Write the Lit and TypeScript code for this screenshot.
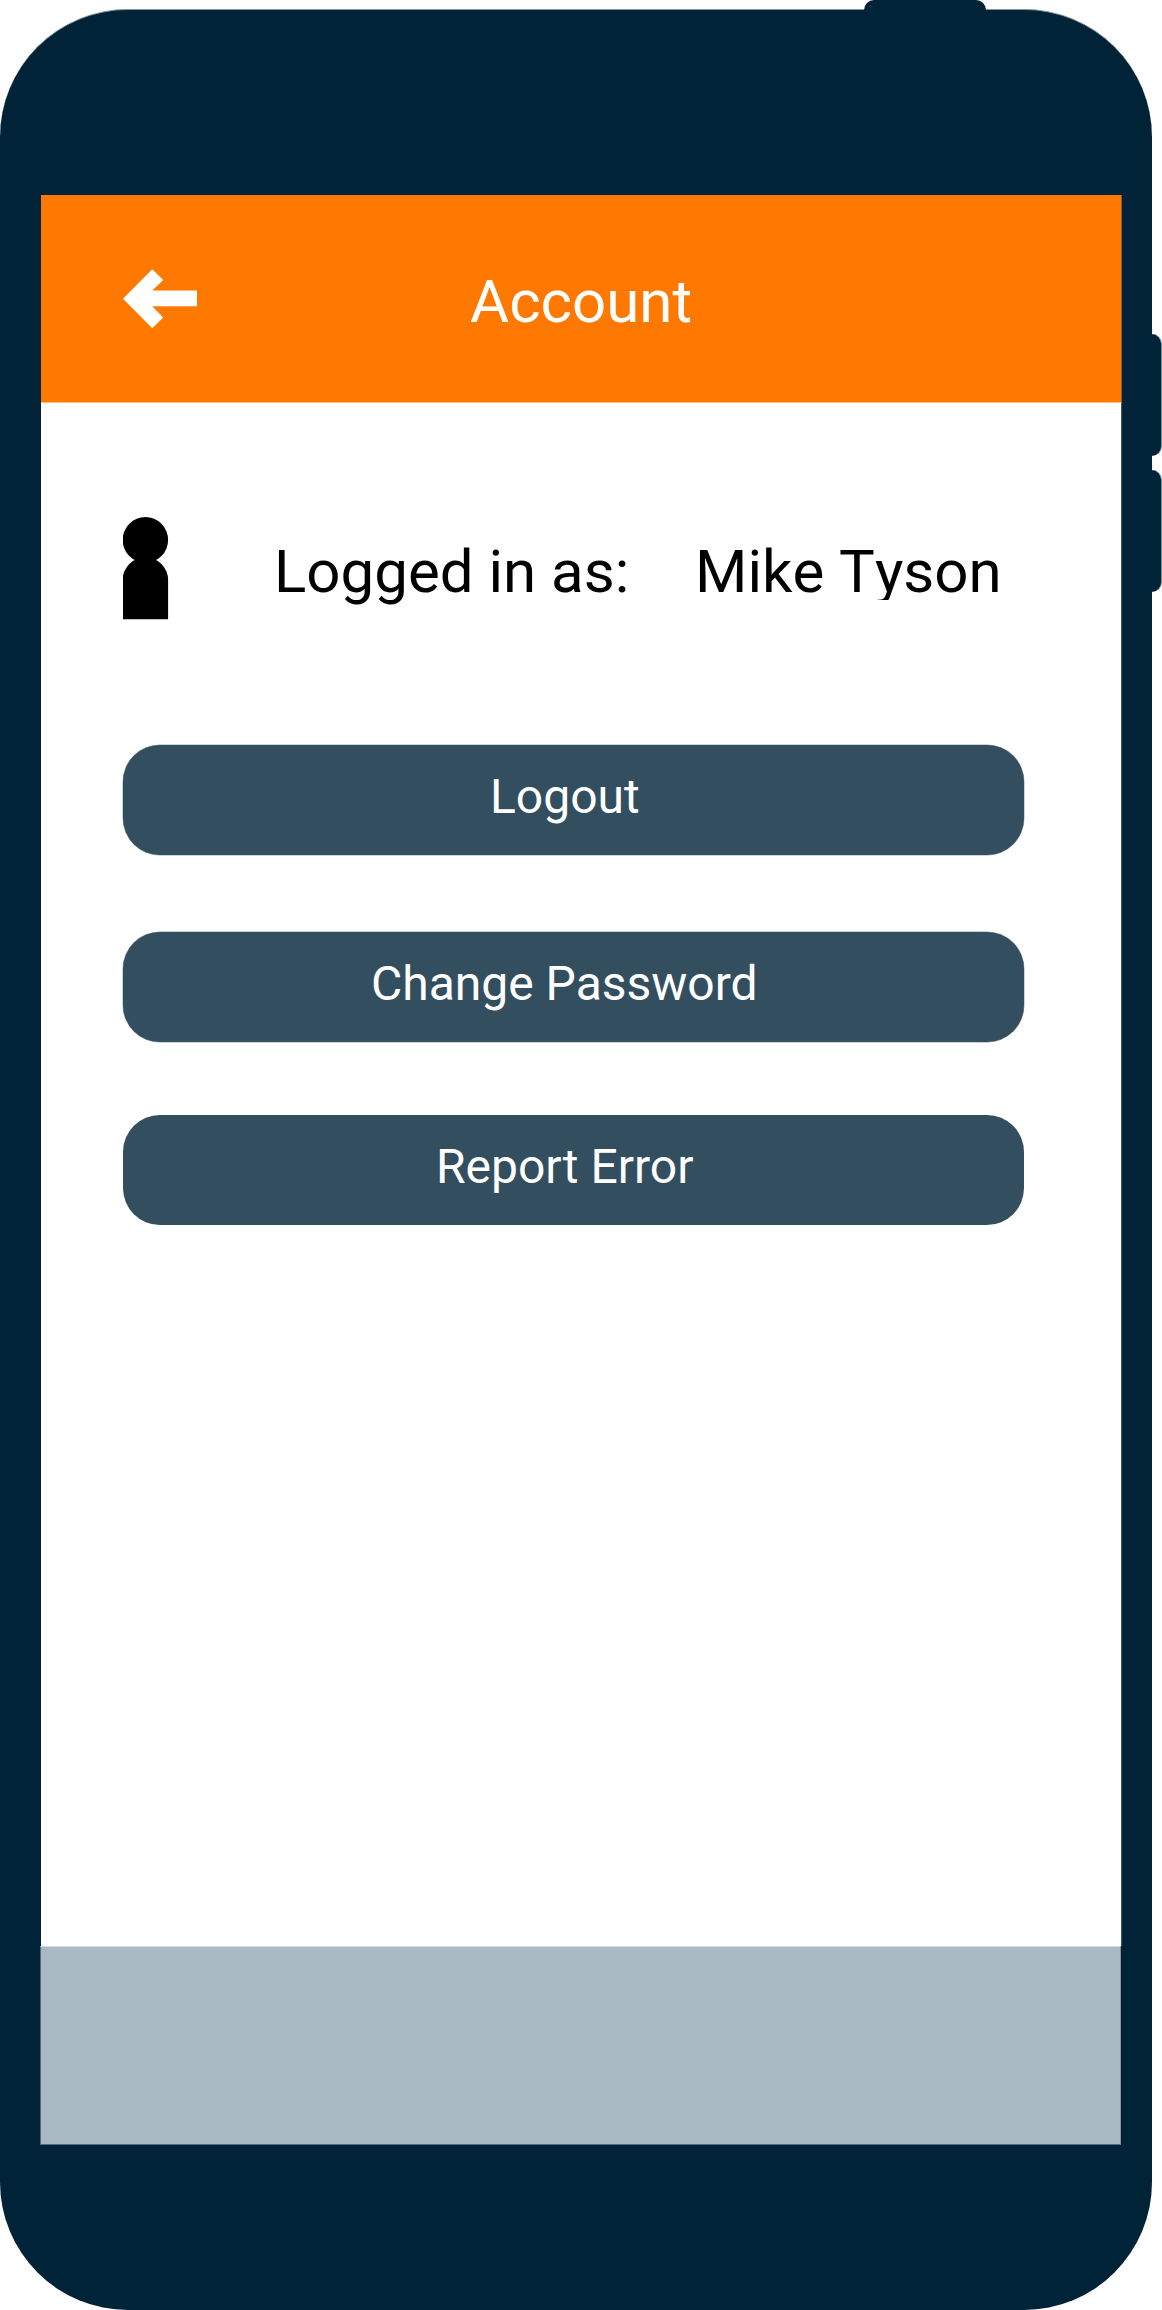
import { LitElement, html, css } from "lit";
import { customElement, property } from "lit/decorators.js";

@customElement("action-button")
class ActionButton extends LitElement {
  @property() label = "";

  static styles = css`
    :host {
      display: block;
    }
    .button {
      display: flex;
      align-items: flex-start;
      justify-content: flex-start;
      box-sizing: border-box;
      width: 100%;
      height: 100%;
      margin: 0;
      padding: var(--label-top, 24px) 0 0 var(--label-left, 0px);
      border: 0;
      border-radius: 37px;
      background: #334e5f;
      box-shadow: var(--soft-edge, none);
      color: #fff;
      font: 400 48px/56px Roboto, sans-serif;
      text-align: left;
      white-space: nowrap;
    }
  `;

  render() {
    return html`<button class="button">${this.label}</button>`;
  }
}

@customElement("app-root")
class AppRoot extends LitElement {
  static styles = css`
    :host {
      display: block;
      position: relative;
      width: 1162px;
      height: 2310px;
      overflow: hidden;
      background: #fff;
      font-family: Roboto, sans-serif;
    }
    .key {
      position: absolute;
      background: #002338;
      border-radius: 10px;
    }
    .power {
      z-index: 1;
      left: 864px;
      top: 0;
      width: 122px;
      height: 30px;
    }
    .volume {
      left: 1130px;
      width: 31px;
      height: 122px;
      border-right: 1px solid #809199;
    }
    .up {
      top: 334px;
    }
    .down {
      top: 470px;
    }
    .phone {
      position: relative;
      box-sizing: border-box;
      width: 1152px;
      height: 2301px;
      margin-top: 9px;
      padding: 185px 30px 0 40px;
      border-top: 1px solid #80919b;
      border-radius: 128px;
      background: #002338;
      display: flex;
      flex-direction: column;
    }
    .screen-wrap {
      padding-left: 1px;
    }
    .header {
      box-sizing: border-box;
      height: 208px;
      padding: 72px 0 0 82px;
      border-right: 1px solid #805c38;
      border-bottom: 1px solid #ffbd80;
      background: #ff7900;
      display: flex;
      align-items: flex-start;
    }
    .back {
      display: block;
      width: 75px;
      height: 64px;
    }
    .title {
      margin: 0 0 0 272px;
      color: #fff;
      font-size: 60px;
      font-weight: 400;
      line-height: 70px;
    }
    .content {
      box-sizing: border-box;
      height: 1543px;
      padding: 113px 0 0 82px;
      border-right: 1px solid #40596a;
      background: #fff;
    }
    .user {
      height: 105px;
      display: flex;
      align-items: flex-start;
      color: #000;
      font-size: 60px;
      line-height: 70px;
      white-space: pre;
    }
    .avatar {
      display: block;
      width: 46px;
      height: 104px;
    }
    .caption {
      width: 421px;
      margin: 21px 0 0 105px;
    }
    .name {
      margin-top: 21px;
      height: 63px;
      overflow: hidden;
      font-kerning: none;
    }
    .actions {
      width: 901px;
      padding-top: 124px;
      display: flex;
      flex-direction: column;
    }
    .logout {
      height: 110px;
      --label-left: 367px;
      --soft-edge: 0 0 0 0.5px rgba(51, 78, 95, 0.5);
    }
    .password {
      height: 110px;
      margin-top: 77px;
      --label-left: 248px;
      --soft-edge: 0 0 0 0.5px rgba(51, 78, 95, 0.5);
    }
    .report {
      height: 110px;
      margin-top: 73px;
      --label-left: 313px;
    }
    .footer {
      box-sizing: border-box;
      width: 1081px;
      height: 199px;
      border: 1px solid #54697a;
      border-top-color: #d4dce0;
      border-right-color: #7e929f;
      background: #a9b9c3;
    }
  `;

  render() {
    return html`
      <span class="key power"></span>
      <span class="key volume up"></span>
      <span class="key volume down"></span>
      <main class="phone">
        <div class="screen-wrap">
          <header class="header">
            <svg class="back" viewBox="0 0 75 64">
              <path
                fill="#fff"
                d="M0 31.7 29.3 2.2 40.2 13 29.3 23.6H74V39.3H29.3L40.2 50.5 29.3 61.3Z"
              />
            </svg>
            <h1 class="title">Account</h1>
          </header>
          <section class="content">
            <div class="user">
              <svg class="avatar" viewBox="0 0 46 104">
                <ellipse cx="22.4" cy="23.9" rx="22.7" ry="22.9" />
                <path d="M-.3 103.3V64A22.7 22.7 0 0 1 45.1 64V103.3Z" />
              </svg>
              <span class="caption">Logged in as:</span>
              <span class="name">Mike Tyson</span>
            </div>
            <div class="actions">
              <action-button class="logout" label="Logout"></action-button>
              <action-button class="password" label="Change Password"></action-button>
              <action-button class="report" label="Report Error"></action-button>
            </div>
          </section>
        </div>
        <footer class="footer"></footer>
      </main>
    `;
  }
}
